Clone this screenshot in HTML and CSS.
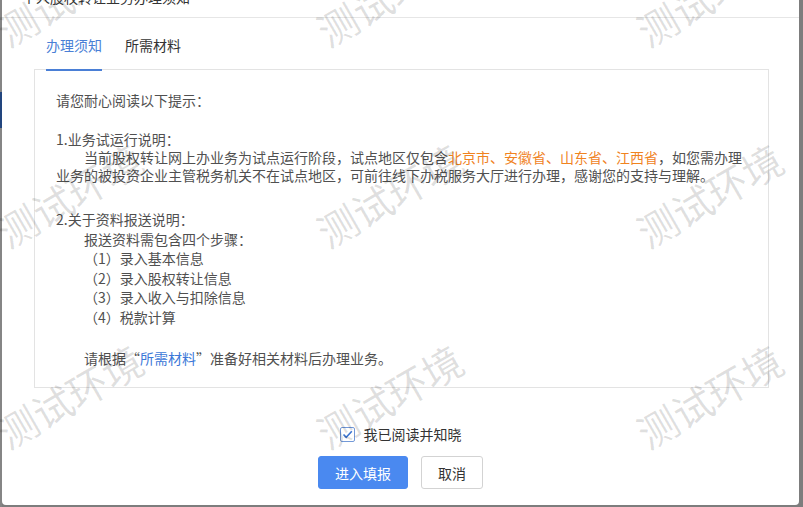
FILE: index.html
```html
<!DOCTYPE html>
<html lang="zh-CN">
<head>
    <meta charset="UTF-8">
    <title>个人股权转让业务办理须知</title>
    <link rel="stylesheet" href="styles.css">
</head>

<body>
    <div class="dialog">
        <div class="dlg-head">个人股权转让业务办理须知</div>

        <div class="dlg-body">
            <div class="tabs">
                <span class="tab active">办理须知</span>
                <span class="tab">所需材料</span>
            </div>

            <div class="notice">
                <p class="intro">请您耐心阅读以下提示：</p>

                <!-- 1 -->
                <div class="sec sec-trial">
                    <p>1.业务试运行说明：</p>
                    <p class="indent">当前股权转让网上办业务为试点运行阶段，试点地区仅包含<span class="hl">北京市、安徽省、山东省、江西省</span>，如您需办理业务的被投资企业主管税务机关不在试点地区，可前往线下办税服务大厅进行办理，感谢您的支持与理解。</p>
                </div>

                <!-- 2 -->
                <div class="sec sec-steps">
                    <p>2.关于资料报送说明：</p>
                    <p class="sub">报送资料需包含四个步骤：</p>
                    <p class="sub">（1）录入基本信息</p>
                    <p class="sub">（2）录入股权转让信息</p>
                    <p class="sub">（3）录入收入与扣除信息</p>
                    <p class="sub">（4）税款计算</p>
                </div>

                <p class="sub tip">请根据“<a class="link">所需材料</a>”准备好相关材料后办理业务。</p>
            </div>
        </div>

        <div class="dlg-foot">
            <label class="agree">
                <span class="check">
                    <svg width="13" height="13" viewBox="0 0 13 13"><polyline points="2.5,6.5 5.2,9.4 10.8,3.2" fill="none" stroke="#3b74d0" stroke-width="1.6"/></svg>
                </span>
                我已阅读并知晓
            </label>
            <div class="btns">
                <button class="btn btn-primary">进入填报</button>
                <button class="btn">取消</button>
            </div>
        </div>
    </div>

    <!-- watermark layer -->
    <div class="wm-layer">
        <div class="wm-grid">
            <div class="wm"><span>测试环境</span></div>
            <div class="wm"><span>测试环境</span></div>
            <div class="wm"><span>测试环境</span></div>
            <div class="wm"><span>测试环境</span></div>
            <div class="wm"><span>测试环境</span></div>
            <div class="wm"><span>测试环境</span></div>
            <div class="wm"><span>测试环境</span></div>
            <div class="wm"><span>测试环境</span></div>
            <div class="wm"><span>测试环境</span></div>
        </div>
    </div>
</body>
</html>
```

FILE: styles.css
```css
html, body{
    margin: 0;
    height: 507px;
    overflow: hidden;
}
body{
    position: relative;
    font-family: "Noto Sans CJK SC", sans-serif;
    color: #333;
    background: linear-gradient(#858585 92px, #22457e 92px, #22457e 128px, #858585 128px) left top / 2px 100% no-repeat, #7d7d7d;
}
p{
    margin: 0;
}

.dialog{
    position: relative;
    margin: -23px 4px 0 2px;
    background: #fff;
    border-radius: 0 0 4px 4px;
}
.dlg-head{
    height: 40px;
    line-height: 40px;
    padding: 0 20px;
    border-bottom: 1px solid #e6e6e6;
    font-size: 14px;
    color: #333;
}
.dlg-body{
    padding: 0 30px 0 32px;
}

.tabs{
    position: relative;
    z-index: 1;
    display: flex;
    gap: 23px;
    padding-left: 12px;
}
.tab{
    padding: 17px 0 14px;
    line-height: 20px;
    font-size: 14px;
    color: #333;
    border-bottom: 2px solid transparent;
}
.tab.active{
    color: #4a7fd6;
    border-bottom-color: #4a7fd6;
}

.notice{
    margin-top: -2px;
    padding: 20px 21px 19px;
    border: 1px solid #e3e3e3;
    font-size: 14px;
    color: #505050;
}
.intro{
    line-height: 20px;
    margin-bottom: 20px;
}
.sec-trial{
    line-height: 18px;
}
.indent{
    text-indent: 28px;
}
.hl{
    color: #f0831f;
}
.sec-steps{
    margin-top: 26px;
    line-height: 19.5px;
}
.sub{
    padding-left: 28px;
}
.tip{
    margin-top: 21px;
    line-height: 20px;
}
.link{
    color: #3c78d8;
}

.dlg-foot{
    display: flex;
    flex-direction: column;
    align-items: center;
    padding: 36px 0 16px;
}
.agree{
    display: flex;
    align-items: center;
    gap: 9px;
    height: 20px;
    font-size: 14px;
    color: #333;
}
.check{
    display: flex;
    width: 13px;
    height: 13px;
    border: 1px solid #7399d8;
    border-radius: 2px;
    background: #fff;
}
.btns{
    display: flex;
    gap: 13px;
    margin-top: 12px;
}
.btn{
    height: 33px;
    padding: 0 16px;
    border: 1px solid #d3d3d3;
    border-radius: 3px;
    background: #fff;
    font-family: inherit;
    font-size: 14px;
    color: #333;
}
.btn-primary{
    border-color: #4a89f0;
    background: #4a89f0;
    color: #fff;
}

/* watermark */
.wm-layer{
    position: absolute;
    inset: 0;
    overflow: hidden;
    pointer-events: none;
}
.wm-grid{
    display: grid;
    grid-template-columns: repeat(3, 320px);
    grid-template-rows: repeat(3, 201px);
    margin-top: -150px;
}
.wm{
    display: flex;
    align-items: flex-end;
    padding-left: 10px;
}
.wm span{
    display: block;
    font-size: 40px;
    line-height: 1;
    white-space: nowrap;
    color: rgba(0,0,0,.13);
    transform: rotate(-30deg);
    transform-origin: 0 100%;
}
```
